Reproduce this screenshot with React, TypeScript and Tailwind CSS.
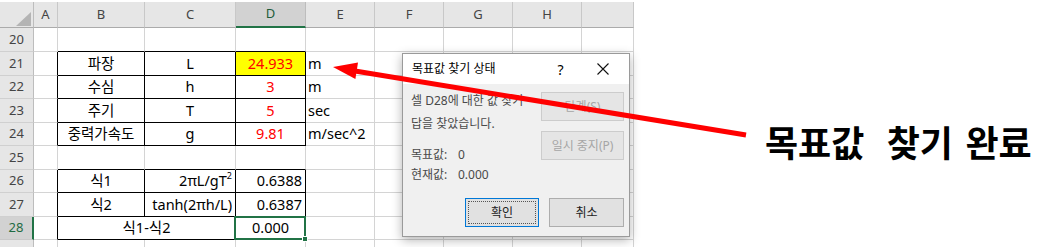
import type { ReactNode } from 'react'

const FONT = "font-['Noto_Sans','Noto_Sans_CJK_KR',sans-serif]"

const COLS = ['A', 'B', 'C', 'D', 'E', 'F', 'G', 'H', 'I']
const ROWS = [20, 21, 22, 23, 24, 25, 26, 27, 28, 29]

type CellDef = { text?: ReactNode; align?: 'left' | 'center' | 'right'; red?: boolean; yellow?: boolean }

const DATA: Record<number, Record<string, CellDef>> = {
  21: { B: { text: '파장' }, C: { text: 'L' }, D: { text: '24.933', red: true, yellow: true }, E: { text: 'm', align: 'left' } },
  22: { B: { text: '수심' }, C: { text: 'h' }, D: { text: '3', red: true }, E: { text: 'm', align: 'left' } },
  23: { B: { text: '주기' }, C: { text: 'T' }, D: { text: '5', red: true }, E: { text: 'sec', align: 'left' } },
  24: { B: { text: '중력가속도' }, C: { text: 'g' }, D: { text: '9.81', red: true }, E: { text: 'm/sec^2', align: 'left' } },
  26: {
    B: { text: '식1' },
    C: { text: <>2πL/gT<sup className="text-[9px] -top-[5px]">2</sup></>, align: 'right' },
    D: { text: '0.6388', align: 'right' },
  },
  27: { B: { text: '식2' }, C: { text: 'tanh(2πh/L)', align: 'right' }, D: { text: '0.6387', align: 'right' } },
}

function inTable(r: number) {
  return (r >= 21 && r <= 24) || (r >= 26 && r <= 28)
}

function rightBlack(r: number, ci: number) {
  return inTable(r) && ci <= 3
}

function bottomBlack(r: number, ci: number) {
  return (r === 20 || r === 25 || inTable(r)) && ci >= 1 && ci <= 3
}

function Cell({ r, ci }: { r: number; ci: number }) {
  const def = DATA[r]?.[COLS[ci]]
  const rc = rightBlack(r, ci) ? 'border-r-black' : 'border-r-[#d4d4d4]'
  const bc = bottomBlack(r, ci) ? 'border-b-black' : 'border-b-[#d4d4d4]'
  const align =
    def?.align === 'left' ? 'justify-start pl-[2px]' : def?.align === 'right' ? 'justify-end pr-[3px]' : 'justify-center'
  return (
    <div
      className={`flex items-center whitespace-nowrap border-r border-b ${rc} ${bc} ${align} ${
        def?.yellow ? 'bg-[#ffff00]' : ''
      } ${def?.red ? 'text-[#ff0000]' : 'text-black'}`}
    >
      {def?.text}
    </div>
  )
}

function Sheet() {
  return (
    <div className={`w-[635px] shrink-0 pt-[2px] text-[14.5px] ${FONT}`}>
      <div className="grid grid-cols-[34px_24px_87px_91px_70px_69px_69px_69px_69px_52px] grid-rows-[26px_24px_24px_23px_24px_23px_24px_23px_24px_23px_20px]">
        {/* header row */}
        <div className="relative border-r border-b border-r-[#bdbdbd] border-b-[#ababab] bg-[#e6e6e6]">
          <svg className="absolute right-[2px] bottom-[1px]" width="15" height="14">
            <polygon points="15,0 15,14 0,14" fill="#b4b4b4" />
          </svg>
        </div>
        {COLS.map((c) =>
          c === 'D' ? (
            <div
              key={c}
              className="flex items-center justify-center border-r border-r-[#bdbdbd] border-b-2 border-b-[#217346] bg-[#d2d2d2] text-[13px] text-[#1f5c3b]"
            >
              {c}
            </div>
          ) : (
            <div
              key={c}
              className="flex items-center justify-center border-r border-b border-r-[#c8c8c8] border-b-[#ababab] bg-[#e6e6e6] text-[13px] text-[#444444]"
            >
              {c === 'I' ? '' : c}
            </div>
          ),
        )}
        {ROWS.map((r) => {
          const cells: ReactNode[] = []
          cells.push(
            r === 28 ? (
              <div
                key="h"
                className="flex items-center justify-center border-r-2 border-b border-r-[#217346] border-b-[#c8c8c8] bg-[#d2d2d2] text-[13px] text-[#1f6b42]"
              >
                {r}
              </div>
            ) : (
              <div
                key="h"
                className="flex items-center justify-center border-r border-b border-r-[#bdbdbd] border-b-[#d0d0d0] bg-[#e6e6e6] text-[13px] text-[#444444]"
              >
                {r === 29 ? '' : r}
              </div>
            ),
          )
          COLS.forEach((c, ci) => {
            if (r === 28 && ci === 1) {
              cells.push(
                <div key={c} className="col-span-2 flex items-center justify-center border-r border-b border-r-black border-b-black">
                  식1-식2
                </div>,
              )
              return
            }
            if (r === 28 && ci === 2) return
            if (r === 28 && ci === 3) {
              cells.push(
                <div key={c} className="relative flex items-center justify-center border-r border-b border-r-black border-b-black">
                  0.000
                  <div className="absolute -left-[2px] -top-[1px] -right-[1px] -bottom-[1px] border-2 border-[#217346]" />
                  <div className="absolute -right-[3px] -bottom-[3px] h-[6px] w-[6px] border border-white bg-[#217346]" />
                </div>,
              )
              return
            }
            cells.push(<Cell key={c} r={r} ci={ci} />)
          })
          return cells
        })}
      </div>
    </div>
  )
}

function DlgButton({ children, disabled, primary }: { children: ReactNode; disabled?: boolean; primary?: boolean }) {
  if (disabled) {
    return (
      <div className="flex h-[29px] w-[83px] items-center justify-center border border-[#cccccc] bg-[#e5e5e5] text-[12px] text-[#a6a6a6]">
        {children}
      </div>
    )
  }
  return (
    <div
      className={`flex h-[29px] items-center justify-center border bg-[#e1e1e1] p-[2px] text-[12px] text-[#222222] ${
        primary ? 'w-[74px] border-[#0078d7]' : 'w-[75px] border-[#adadad]'
      }`}
    >
      <div className={`flex h-full w-full items-center justify-center ${primary ? 'border border-dotted border-[#555555]' : ''}`}>
        {children}
      </div>
    </div>
  )
}

function Dialog() {
  return (
    <div
      className={`absolute left-[402px] top-[53px] z-10 flex h-[184px] w-[228px] flex-col border border-[#9a9a9a] bg-[#f0f0f0] shadow-[0_3px_10px_rgba(0,0,0,0.3)] ${FONT}`}
    >
      <div className="flex h-[30px] shrink-0 items-center bg-white pl-[9px] text-[12px] text-black">
        <span>목표값 찾기 상태</span>
        <span className="ml-[62px] text-[14px]">?</span>
        <svg className="ml-[33px]" width="12" height="12" viewBox="0 0 12 12">
          <path d="M0.5 0.5 L11.5 11.5 M11.5 0.5 L0.5 11.5" stroke="#111111" strokeWidth="1.1" />
        </svg>
      </div>
      <div className="flex">
        <div className="flex-1 pl-[8px] pt-[5px] text-[12px] text-[#4a4a4a]">
          <div className="leading-[23px] whitespace-nowrap">셀 D28에 대한 값 찾기</div>
          <div className="leading-[23px]">답을 찾았습니다.</div>
          <div className="mt-[10px] flex leading-[20px]">
            <span className="w-[47px]">목표값:</span>
            <span>0</span>
          </div>
          <div className="flex leading-[20px]">
            <span className="w-[47px]">현재값:</span>
            <span>0.000</span>
          </div>
        </div>
        <div className="mr-[5px] flex flex-col gap-[10px] pt-[8px]">
          <DlgButton disabled>단계(S)</DlgButton>
          <DlgButton disabled>일시 중지(P)</DlgButton>
        </div>
      </div>
      <div className="mt-auto mb-[9px] mr-[5px] flex justify-end gap-[10px]">
        <DlgButton primary>확인</DlgButton>
        <DlgButton>취소</DlgButton>
      </div>
    </div>
  )
}

function Arrow() {
  return (
    <svg className="pointer-events-none absolute left-0 top-0 z-20" width="1061" height="247">
      <line x1="746" y1="135" x2="352" y2="70.5" stroke="#ff0000" strokeWidth="5" />
      <polygon points="333,67 358,62.5 355.4,79" fill="#ff0000" />
    </svg>
  )
}

export default function App() {
  return (
    <div className="relative flex h-[247px] w-[1061px] overflow-hidden bg-white">
      <Sheet />
      <div className="pl-[130px] pt-[126px]">
        <div className={`whitespace-nowrap text-[36px] font-bold leading-none text-black ${FONT}`}>
          <span>목표값</span> <span className="ml-[13px]">찾기</span> <span className="ml-[3px]">완료</span>
        </div>
      </div>
      <Dialog />
      <Arrow />
    </div>
  )
}
